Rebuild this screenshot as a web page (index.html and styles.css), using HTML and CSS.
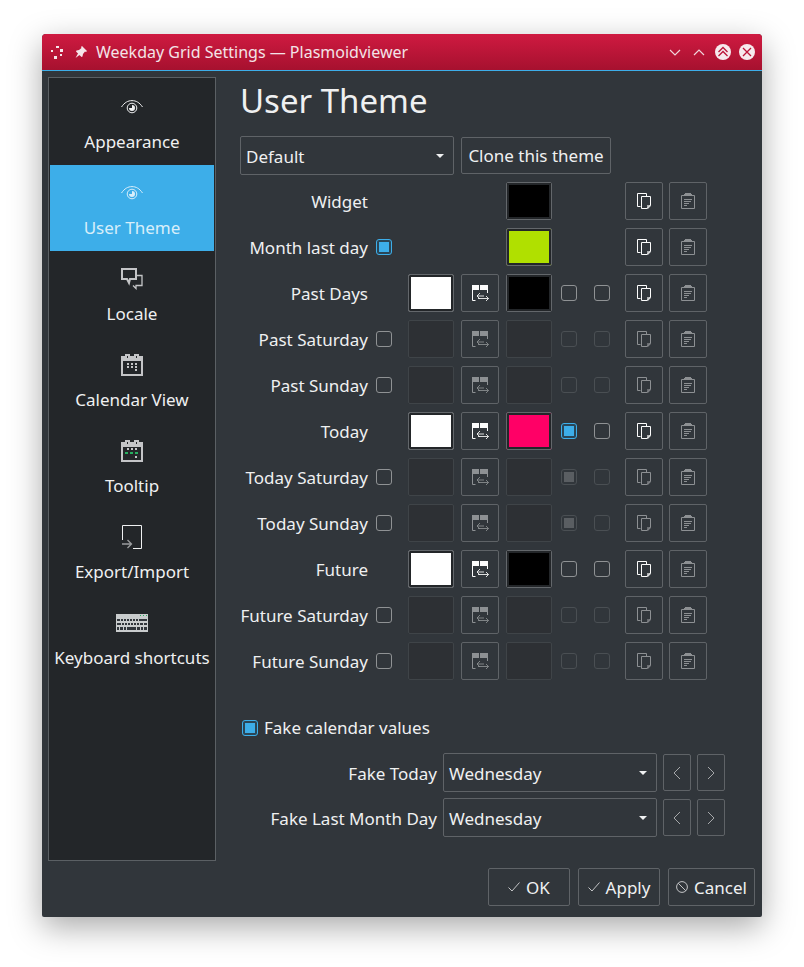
FILE: index.html
```html
<!DOCTYPE html>
<html lang="en">

<head>
  <meta charset="UTF-8">
  <meta name="viewport" content="width=device-width, initial-scale=1.0">
  <title>Weekday Grid Settings</title>
  <link rel="stylesheet" href="styles.css">
</head>

<body>
  <svg class="defs" width="0" height="0">
    <symbol id="i-swap" viewBox="0 0 17 16">
      <path d="M0 0h7v5H0zM8 0h8v5H8z" fill="currentColor"/>
      <path d="M.5 5v10.500h3M15.500 5v3" fill="none" stroke="currentColor"/>
      <path d="M12 11H5M8 8l-3 3 3 3M6 13.500h10.500M14 11l2.500 2.500L14 16" fill="none" stroke="currentColor" opacity=".85"/>
    </symbol>
    <symbol id="i-copy" viewBox="0 0 14 16">
      <path d="M3.500 13.500h-3V.5h9v2.500" fill="none" stroke="currentColor"/>
      <path d="M4.500 3.500h9v8.500l-3.500 3.500H4.500z" fill="none" stroke="currentColor"/>
      <path d="M10 12h4v1l-3 3h-1z" fill="currentColor" opacity=".6"/>
    </symbol>
    <symbol id="i-paste" viewBox="0 0 14 16">
      <path d="M4 0h6v1h1v2H3V1h1z" fill="currentColor"/>
      <path d="M3 2.500H.5v13h13v-13H11" fill="none" stroke="currentColor"/>
      <path d="M3 6.500h8M3 8.500h7M3 10.500h5M3 12.500h3" fill="none" stroke="currentColor"/>
    </symbol>
    <symbol id="i-eye" viewBox="0 0 22 14">
      <path d="M.5 7C3.500 2.500 7 .6 11 .6S18.500 2.500 21.500 7" fill="none" stroke="currentColor"/>
      <circle cx="11" cy="8" r="4.800" fill="none" stroke="currentColor"/>
      <path d="M11 5a3 3 0 1 1-3 3h3z" fill="currentColor"/>
    </symbol>
    <symbol id="i-calendar" viewBox="0 0 22 22">
      <path d="M1 3h4V1h3v2h6V1h3v2h4v18H1z" fill="none" stroke="#c4c5c7" stroke-width="2"/>
      <path d="M2 4h18v3H2z" fill="#c4c5c7"/>
    </symbol>
  </svg>

  <div class="window">
    <header class="titlebar">
      <svg class="tb-menu" width="14" height="13" viewBox="0 0 14 13">
        <path d="M6 0h3v2H6zM1 4h2v2H1zM10 3h3v3h-3zM10 8h2v2h-2zM4 10h3v3H4z" fill="#f5e6ea"/>
      </svg>
      <svg class="tb-pin" width="12" height="12" viewBox="0 0 12 12">
        <path d="M7 0l5 5-1 1-1-.500L8 8l-.500 2.500-1 .500L1 5.500l.500-1L4 4l2.500-2L6 1zM3 7.500l1.500 1.500L.500 12z" fill="#f5e6ea"/>
      </svg>
      <span class="tb-title">Weekday Grid Settings — Plasmoidviewer</span>
      <svg class="tb-chev" width="12" height="7" viewBox="0 0 12 7">
        <path d="M1 1l5 5 5-5" fill="none" stroke="#f0d5db" stroke-width="1.200"/>
      </svg>
      <svg class="tb-chev" width="12" height="7" viewBox="0 0 12 7">
        <path d="M1 6l5-5 5 5" fill="none" stroke="#f0d5db" stroke-width="1.200"/>
      </svg>
      <svg class="tb-circle" width="16" height="16" viewBox="0 0 16 16">
        <circle cx="8" cy="8" r="8" fill="#f6eaed"/>
        <path d="M3.500 8L8 3.500 12.500 8M3.500 12L8 7.500 12.500 12" fill="none" stroke="#bb1538" stroke-width="1.300"/>
      </svg>
      <svg class="tb-circle" width="16" height="16" viewBox="0 0 16 16">
        <circle cx="8" cy="8" r="8" fill="#f6eaed"/>
        <path d="M4 4l8 8M12 4l-8 8" fill="none" stroke="#bb1538" stroke-width="1.300"/>
      </svg>
    </header>

    <div class="content">
      <nav class="sidebar">
        <div class="nav-item">
          <span class="nav-icon"><svg width="22" height="14"><use href="#i-eye"/></svg></span>
          <span class="nav-label">Appearance</span>
        </div>
        <div class="nav-item active">
          <span class="nav-icon"><svg width="22" height="14"><use href="#i-eye"/></svg></span>
          <span class="nav-label">User Theme</span>
        </div>
        <div class="nav-item">
          <span class="nav-icon">
            <svg width="22" height="22" viewBox="0 0 22 22">
              <path d="M15 7.500h6v10h-6v3l-3-3" fill="none" stroke="#c4c5c7" stroke-width="1.300"/>
              <path d="M1 1h14v10H9l-1 4-2-4H1z" fill="#232629" stroke="#c4c5c7" stroke-width="2"/>
            </svg>
          </span>
          <span class="nav-label">Locale</span>
        </div>
        <div class="nav-item">
          <span class="nav-icon">
            <svg width="22" height="22" viewBox="0 0 22 22">
              <use href="#i-calendar"/>
              <path d="M6 9h2v2H6zM10 9h2v2h-2zM14 9h2v2h-2zM6 12h2v2H6zM10 12h2v2h-2zM14 12h2v2h-2zM14 15h2v2h-2z" fill="#c4c5c7"/>
            </svg>
          </span>
          <span class="nav-label">Calendar View</span>
        </div>
        <div class="nav-item">
          <span class="nav-icon">
            <svg width="22" height="22" viewBox="0 0 22 22">
              <use href="#i-calendar"/>
              <path d="M6 8h2v2H6zM10 8h2v2h-2zM14 8h2v2h-2zM14 16h2v2h-2z" fill="#c4c5c7"/>
              <path d="M4 12h3v2H4zM9 12h3v2H9zM14 12h3v2h-3z" fill="#27ae60"/>
            </svg>
          </span>
          <span class="nav-label">Tooltip</span>
        </div>
        <div class="nav-item">
          <span class="nav-icon">
            <svg width="20" height="24" viewBox="0 0 20 24">
              <path d="M.5 15V.5h19v23H11" fill="none" stroke="#eff0f1"/>
              <path d="M0 19h9M5.500 15L9.500 19l-4 4" fill="none" stroke="#9a9c9e" stroke-width="1.300"/>
            </svg>
          </span>
          <span class="nav-label">Export/Import</span>
        </div>
        <div class="nav-item">
          <span class="nav-icon">
            <svg width="32" height="18" viewBox="0 0 32 18">
              <path d="M0 0h32v18H0z" fill="#c9cccd"/>
              <path d="M24 1h1v1h-1zM27 1h1v1h-1zM30 1h1v1h-1z" fill="#27ae60"/>
              <path d="M1 5h3v2H1zM5 5h2v2H5zM8 5h2v2H8zM11 5h2v2h-2zM14 5h2v2h-2zM17 5h2v2h-2zM20 5h2v2h-2zM23 5h8v2h-8zM1 9h4v2H1zM6 9h2v2H6zM9 9h2v2H9zM12 9h2v2h-2zM15 9h2v2h-2zM18 9h2v2h-2zM21 9h2v2h-2zM24 9h3v2h-3zM28 9h3v2h-3zM1 13h2v3H1zM4 13h3v3H4zM8 13h2v3H8zM11 13h9v3h-9zM21 13h3v3h-3zM25 13h2v3h-2zM28 13h3v3h-3z" fill="#31363b"/>
            </svg>
          </span>
          <span class="nav-label">Keyboard shortcuts</span>
        </div>
      </nav>

      <main class="page">
        <h1>User Theme</h1>

        <div class="theme-row">
          <div class="combo theme-combo">Default<span class="arrow"></span></div>
          <button class="btn clone-btn" type="button">Clone this theme</button>
        </div>

        <div class="grid">
          <div class="lbl">Widget</div>
          <span></span><span></span><span></span>
          <div class="swatch black"></div>
          <span></span><span></span>
          <button class="btn icon-btn" type="button"><svg class="ic-copy" width="14" height="16"><use href="#i-copy"/></svg></button>
          <button class="btn icon-btn" type="button"><svg class="ic-paste" width="14" height="16"><use href="#i-paste"/></svg></button>

          <div class="lbl">Month last day</div>
          <span class="check on"></span><span></span><span></span>
          <div class="swatch lime"></div>
          <span></span><span></span>
          <button class="btn icon-btn" type="button"><svg class="ic-copy" width="14" height="16"><use href="#i-copy"/></svg></button>
          <button class="btn icon-btn" type="button"><svg class="ic-paste" width="14" height="16"><use href="#i-paste"/></svg></button>

          <div class="lbl">Past Days</div>
          <span></span>
          <div class="swatch white"></div>
          <button class="btn icon-btn" type="button"><svg class="ic-swap" width="17" height="16"><use href="#i-swap"/></svg></button>
          <div class="swatch black"></div>
          <span class="check"></span><span class="check"></span>
          <button class="btn icon-btn" type="button"><svg class="ic-copy" width="14" height="16"><use href="#i-copy"/></svg></button>
          <button class="btn icon-btn" type="button"><svg class="ic-paste" width="14" height="16"><use href="#i-paste"/></svg></button>

          <div class="lbl">Past Saturday</div>
          <span class="check"></span>
          <div class="swatch off"></div>
          <button class="btn icon-btn dim" type="button"><svg class="ic-swap" width="17" height="16"><use href="#i-swap"/></svg></button>
          <div class="swatch off"></div>
          <span class="check off"></span><span class="check off"></span>
          <button class="btn icon-btn dim" type="button"><svg class="ic-copy" width="14" height="16"><use href="#i-copy"/></svg></button>
          <button class="btn icon-btn" type="button"><svg class="ic-paste" width="14" height="16"><use href="#i-paste"/></svg></button>

          <div class="lbl">Past Sunday</div>
          <span class="check"></span>
          <div class="swatch off"></div>
          <button class="btn icon-btn dim" type="button"><svg class="ic-swap" width="17" height="16"><use href="#i-swap"/></svg></button>
          <div class="swatch off"></div>
          <span class="check off"></span><span class="check off"></span>
          <button class="btn icon-btn dim" type="button"><svg class="ic-copy" width="14" height="16"><use href="#i-copy"/></svg></button>
          <button class="btn icon-btn" type="button"><svg class="ic-paste" width="14" height="16"><use href="#i-paste"/></svg></button>

          <div class="lbl">Today</div>
          <span></span>
          <div class="swatch white"></div>
          <button class="btn icon-btn" type="button"><svg class="ic-swap" width="17" height="16"><use href="#i-swap"/></svg></button>
          <div class="swatch pink"></div>
          <span class="check on"></span><span class="check"></span>
          <button class="btn icon-btn" type="button"><svg class="ic-copy" width="14" height="16"><use href="#i-copy"/></svg></button>
          <button class="btn icon-btn" type="button"><svg class="ic-paste" width="14" height="16"><use href="#i-paste"/></svg></button>

          <div class="lbl">Today Saturday</div>
          <span class="check"></span>
          <div class="swatch off"></div>
          <button class="btn icon-btn dim" type="button"><svg class="ic-swap" width="17" height="16"><use href="#i-swap"/></svg></button>
          <div class="swatch off"></div>
          <span class="check off on"></span><span class="check off"></span>
          <button class="btn icon-btn dim" type="button"><svg class="ic-copy" width="14" height="16"><use href="#i-copy"/></svg></button>
          <button class="btn icon-btn" type="button"><svg class="ic-paste" width="14" height="16"><use href="#i-paste"/></svg></button>

          <div class="lbl">Today Sunday</div>
          <span class="check"></span>
          <div class="swatch off"></div>
          <button class="btn icon-btn dim" type="button"><svg class="ic-swap" width="17" height="16"><use href="#i-swap"/></svg></button>
          <div class="swatch off"></div>
          <span class="check off on"></span><span class="check off"></span>
          <button class="btn icon-btn dim" type="button"><svg class="ic-copy" width="14" height="16"><use href="#i-copy"/></svg></button>
          <button class="btn icon-btn" type="button"><svg class="ic-paste" width="14" height="16"><use href="#i-paste"/></svg></button>

          <div class="lbl">Future</div>
          <span></span>
          <div class="swatch white"></div>
          <button class="btn icon-btn" type="button"><svg class="ic-swap" width="17" height="16"><use href="#i-swap"/></svg></button>
          <div class="swatch black"></div>
          <span class="check"></span><span class="check"></span>
          <button class="btn icon-btn" type="button"><svg class="ic-copy" width="14" height="16"><use href="#i-copy"/></svg></button>
          <button class="btn icon-btn" type="button"><svg class="ic-paste" width="14" height="16"><use href="#i-paste"/></svg></button>

          <div class="lbl">Future Saturday</div>
          <span class="check"></span>
          <div class="swatch off"></div>
          <button class="btn icon-btn dim" type="button"><svg class="ic-swap" width="17" height="16"><use href="#i-swap"/></svg></button>
          <div class="swatch off"></div>
          <span class="check off"></span><span class="check off"></span>
          <button class="btn icon-btn dim" type="button"><svg class="ic-copy" width="14" height="16"><use href="#i-copy"/></svg></button>
          <button class="btn icon-btn" type="button"><svg class="ic-paste" width="14" height="16"><use href="#i-paste"/></svg></button>

          <div class="lbl">Future Sunday</div>
          <span class="check"></span>
          <div class="swatch off"></div>
          <button class="btn icon-btn dim" type="button"><svg class="ic-swap" width="17" height="16"><use href="#i-swap"/></svg></button>
          <div class="swatch off"></div>
          <span class="check off"></span><span class="check off"></span>
          <button class="btn icon-btn dim" type="button"><svg class="ic-copy" width="14" height="16"><use href="#i-copy"/></svg></button>
          <button class="btn icon-btn" type="button"><svg class="ic-paste" width="14" height="16"><use href="#i-paste"/></svg></button>
        </div>

        <div class="fake-toggle">
          <span class="check on"></span>
          <span>Fake calendar values</span>
        </div>

        <div class="fake-grid">
          <div class="lbl">Fake Today</div>
          <div class="combo">Wednesday<span class="arrow"></span></div>
          <button class="btn step-btn" type="button"><svg width="8" height="14" viewBox="0 0 8 14"><path d="M7 1L1 7l6 6" fill="none" stroke="#a6a8aa"/></svg></button>
          <button class="btn step-btn" type="button"><svg width="8" height="14" viewBox="0 0 8 14"><path d="M1 1l6 6-6 6" fill="none" stroke="#a6a8aa"/></svg></button>

          <div class="lbl">Fake Last Month Day</div>
          <div class="combo">Wednesday<span class="arrow"></span></div>
          <button class="btn step-btn" type="button"><svg width="8" height="14" viewBox="0 0 8 14"><path d="M7 1L1 7l6 6" fill="none" stroke="#a6a8aa"/></svg></button>
          <button class="btn step-btn" type="button"><svg width="8" height="14" viewBox="0 0 8 14"><path d="M1 1l6 6-6 6" fill="none" stroke="#a6a8aa"/></svg></button>
        </div>
      </main>
    </div>

    <footer class="footer">
      <button class="btn foot-btn" type="button"><svg width="12" height="10" viewBox="0 0 12 10"><path d="M.5 5.500L4 9l7.500-8.500" fill="none" stroke="#c4c5c7"/></svg>OK</button>
      <button class="btn foot-btn" type="button"><svg width="12" height="10" viewBox="0 0 12 10"><path d="M.5 5.500L4 9l7.500-8.500" fill="none" stroke="#c4c5c7"/></svg>Apply</button>
      <button class="btn foot-btn cancel-btn" type="button"><svg width="12" height="12" viewBox="0 0 12 12"><circle cx="6" cy="6" r="5.400" fill="none" stroke="#c4c5c7"/><path d="M2.200 2.200l7.600 7.600" stroke="#c4c5c7"/></svg>Cancel</button>
    </footer>
  </div>
</body>

</html>
```

FILE: styles.css
```css
html {
  height: 100%;
  background-color: #fff;
}

body {
  margin: 0;
  min-height: 100%;
  box-sizing: border-box;
  padding: 34px 0 0 42px;
  font-family: "Noto Sans", sans-serif;
  font-size: 17px;
  color: #eff0f1;
  overflow: hidden;
}

.defs {
  display: block;
  height: 0;
}

.window {
  width: 720px;
  height: 883px;
  background-color: #31363b;
  border-radius: 4px 4px 2px 2px;
  box-shadow: 0 10px 32px rgba(0, 0, 0, 0.34);
  display: flex;
  flex-direction: column;
}

.titlebar {
  height: 36px;
  flex: none;
  display: flex;
  align-items: center;
  padding: 0 7px 0 8px;
  background: linear-gradient(#cf1a41, #a6112f);
  border-bottom: 1px solid #3daee9;
  border-radius: 4px 4px 0 0;
  color: #f3e3e7;
  font-size: 16px;
}

.tb-pin {
  margin-left: 11px;
}

.tb-title {
  margin-left: 9px;
  flex: 1;
  line-height: 36px;
}

.tb-chev {
  margin-right: 12px;
}

.tb-chev + .tb-circle {
  margin-left: -2px;
}

.tb-circle + .tb-circle {
  margin-left: 8px;
}

.content {
  display: flex;
  padding: 6px 0 0 6px;
}

.sidebar {
  width: 168px;
  height: 784px;
  box-sizing: border-box;
  flex: none;
  padding: 1px;
  border: 1px solid #5b6064;
  background-color: #232629;
}

.nav-item {
  height: 86px;
  display: flex;
  flex-direction: column;
  align-items: center;
  padding-top: 12px;
  box-sizing: border-box;
  color: #eff0f1;
}

.nav-item.active {
  background-color: #3daee9;
  color: #d8eefa;
}

.nav-icon {
  height: 32px;
  display: flex;
  align-items: center;
  justify-content: center;
}

.nav-label {
  margin-top: 8px;
  line-height: 22px;
  white-space: nowrap;
}

.page {
  margin-left: 24px;
  flex: 1;
}

h1 {
  margin: 2px 0 13px 0;
  font-size: 33px;
  font-weight: 400;
  line-height: 44px;
}

.theme-row {
  display: flex;
  align-items: center;
  gap: 7px;
  margin-bottom: 7px;
}

.combo {
  height: 39px;
  box-sizing: border-box;
  display: flex;
  align-items: center;
  justify-content: space-between;
  padding: 2px 9px 0 5px;
  border: 1px solid #5f6367;
  border-radius: 2px;
}

.theme-combo {
  width: 214px;
}

.arrow {
  width: 0;
  height: 0;
  margin-top: -2px;
  border-left: 4px solid transparent;
  border-right: 4px solid transparent;
  border-top: 4px solid #eff0f1;
}

.btn {
  height: 38px;
  box-sizing: border-box;
  padding: 0;
  border: 1px solid #5f6367;
  border-radius: 2px;
  background-color: #31363b;
  color: #eff0f1;
  font-family: inherit;
  font-size: 17px;
  display: inline-flex;
  align-items: center;
  justify-content: center;
}

.clone-btn {
  width: 150px;
  height: 37px;
}

.grid {
  display: grid;
  grid-template-columns: 136px 32px 53px 45px 55px 33px 31px 44px 38px;
  grid-auto-rows: 38px;
  row-gap: 8px;
  align-items: center;
}

.lbl {
  text-align: right;
  white-space: nowrap;
  padding-right: 8px;
  line-height: 24px;
  padding-top: 1px;
}

.swatch {
  width: 46px;
  height: 38px;
  box-sizing: border-box;
  border: 1px solid #63676b;
  outline: 2px solid #232629;
  outline-offset: -3px;
  border-radius: 2px;
}

.swatch.white { background-color: #fff; }
.swatch.black { background-color: #000; }
.swatch.lime { background-color: #b0e000; }
.swatch.pink { background-color: #ff0066; }

.swatch.off {
  background-color: #2d3034;
  border-color: #3f4448;
  outline: none;
}

.check {
  width: 16px;
  height: 16px;
  box-sizing: border-box;
  border: 1px solid #8f9294;
  border-radius: 3px;
  display: block;
}

.check.on {
  border-color: #3daee9;
  padding: 2px;
  background-color: #2a4657;
}

.check.on::before {
  content: "";
  display: block;
  width: 10px;
  height: 10px;
  background-color: #3daee9;
}

.check.off {
  border-color: #4a4f53;
}

.check.off.on {
  background-color: transparent;
}

.check.off.on::before {
  background-color: #5a5e62;
}

.icon-btn {
  width: 38px;
}

.ic-swap,
.ic-copy {
  color: #fcfcfc;
}

.ic-paste {
  color: #8d9093;
}

.dim .ic-swap,
.dim .ic-copy {
  color: #8d9093;
}

.fake-toggle {
  display: flex;
  align-items: center;
  gap: 6px;
  margin: 37px 0 14px 2px;
  line-height: 22px;
}

.fake-grid {
  display: grid;
  grid-template-columns: 197px 214px 28px 28px;
  grid-auto-rows: 39px;
  column-gap: 6px;
  row-gap: 6px;
  align-items: center;
}

.fake-grid .lbl {
  padding-right: 0;
  padding-top: 2px;
}

.step-btn {
  width: 28px;
  height: 37px;
}

.footer {
  display: flex;
  justify-content: flex-end;
  gap: 8px;
  padding: 7px 7px 0 0;
}

.foot-btn {
  width: 82px;
  gap: 6px;
}

.cancel-btn {
  width: 87px;
}
```
